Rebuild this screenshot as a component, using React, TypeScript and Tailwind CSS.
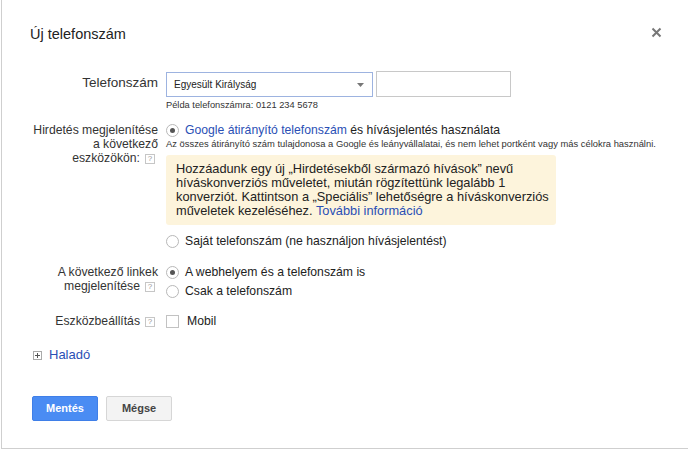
import React from "react";

function Help() {
  return (
    <span className="inline-flex items-center justify-center w-[10px] h-[10px] border border-[#c6c6c6] text-[8px] leading-none text-[#999] ml-[5px] mr-[3px] align-middle">
      ?
    </span>
  );
}

function Radio({ checked }: { checked?: boolean }) {
  return (
    <span className="w-[13px] h-[13px] rounded-full border border-[#b8b8b8] bg-white flex items-center justify-center shrink-0">
      {checked && <span className="w-[5px] h-[5px] rounded-full bg-[#555]" />}
    </span>
  );
}

function Label({ children }: { children: React.ReactNode }) {
  return <div className="text-right whitespace-nowrap text-[12.2px] leading-[14px] text-[#333]">{children}</div>;
}

export default function App() {
  return (
    <div className="ml-px h-[449px] border-l border-b border-[#cfcfcf] bg-white text-[#222]" style={{ fontFamily: '"Liberation Sans", Arial, sans-serif' }}>
      <div className="flex items-start justify-between pt-[25px] pl-[28px] pr-[26px]">
        <h1 className="text-[14.5px] leading-[18px] text-[#222]">Új telefonszám</h1>
        <button className="mt-px w-[12px] h-[12px] flex items-center justify-center">
          <svg width="11" height="11" viewBox="0 0 11 11">
            <path d="M1.5 1.5l8 8M9.5 1.5l-8 8" stroke="#777" strokeWidth="2" />
          </svg>
        </button>
      </div>

      <div className="pl-[19px] mt-[28px] grid grid-cols-[137px_1fr] gap-x-[8px]">
        {/* phone number */}
        <div className="h-[25px] flex items-center justify-end text-[13.5px] text-[#333]">Telefonszám</div>
        <div>
          <div className="flex items-start gap-[3px]">
            <div className="mt-px w-[207px] h-[25px] border border-[#9db3e0] flex items-center justify-between pl-[7px] pr-[8px] text-[10px] text-[#222]">
              <span>Egyesült Királyság</span>
              <svg width="7" height="4" viewBox="0 0 7 4"><path d="M0 0h7L3.5 4z" fill="#777" /></svg>
            </div>
            <div className="w-[135px] h-[26px] border border-[#c8c8c8]" />
          </div>
          <div className="text-[9.3px] leading-[14px] text-[#333] mt-px">Példa telefonszámra: 0121 234 5678</div>
        </div>

        {/* call extension */}
        <div className="mt-[11px]">
          <Label>
            Hirdetés megjelenítése
            <br />a következő
            <br />
            eszközökön:<Help />
          </Label>
        </div>
        <div className="mt-[11px]">
          <div className="flex items-center gap-[6px] text-[12.2px] leading-[14px]">
            <Radio checked />
            <span className="whitespace-nowrap">
              <span className="text-[#2a4fb5]">Google átirányító telefonszám</span> és hívásjelentés használata
            </span>
          </div>
          <div className="text-[9.4px] leading-[14px] text-[#333] whitespace-nowrap">
            Az összes átirányító szám tulajdonosa a Google és leányvállalatai, és nem lehet portként vagy más célokra használni.
          </div>
          <div className="mt-[4px] w-[390px] rounded-[3px] bg-[#fdf4dc] pt-[7px] pb-[7px] pl-[10px] text-[12.8px] leading-[14px] text-[#222] whitespace-nowrap">
            Hozzáadunk egy új „Hirdetésekből származó hívások” nevű
            <br />
            híváskonverziós műveletet, miután rögzítettünk legalább 1
            <br />
            konverziót. Kattintson a „Speciális” lehetőségre a híváskonverziós
            <br />
            műveletek kezeléséhez. <span className="text-[#2a4fb5]">További információ</span>
          </div>
          <div className="mt-[9px] flex items-center gap-[6px] text-[12.2px] leading-[14px]">
            <Radio />
            <span>Saját telefonszám (ne használjon hívásjelentést)</span>
          </div>
        </div>

        {/* links */}
        <div className="mt-[17px]">
          <Label>
            A következő linkek
            <br />
            megjelenítése<Help />
          </Label>
        </div>
        <div className="mt-[17px] flex flex-col gap-[5px] text-[12.2px] leading-[14px]">
          <div className="flex items-center gap-[6px]">
            <Radio checked />
            <span>A webhelyem és a telefonszám is</span>
          </div>
          <div className="flex items-center gap-[6px]">
            <Radio />
            <span>Csak a telefonszám</span>
          </div>
        </div>

        {/* device */}
        <div className="mt-[16px]">
          <Label>
            Eszközbeállítás<Help />
          </Label>
        </div>
        <div className="mt-[16px] flex items-center gap-[8px] text-[12.2px] leading-[14px]">
          <span className="w-[13px] h-[13px] border border-[#c2c2c2] bg-white" />
          <span>Mobil</span>
        </div>
      </div>

      <div className="pl-[31px] mt-[19px] flex items-center gap-[7px]">
        <span className="w-[9px] h-[9px] border border-[#aaa] flex items-center justify-center">
          <svg width="7" height="7" viewBox="0 0 7 7"><path d="M3.5 1v5M1 3.5h5" stroke="#555" strokeWidth="1" /></svg>
        </span>
        <span className="text-[13px] leading-[16px] text-[#2a4fb5]">Haladó</span>
      </div>

      <div className="pl-[30px] mt-[33px] flex gap-[8px]">
        <button className="w-[66px] h-[25px] rounded-[2px] bg-[#4a8cf3] border border-[#3f7fe8] text-white text-[11px] font-bold">Mentés</button>
        <button className="w-[66px] h-[25px] rounded-[2px] bg-[#f3f3f3] border border-[#d6d6d6] text-[#444] text-[11px] font-bold">Mégse</button>
      </div>
    </div>
  );
}
